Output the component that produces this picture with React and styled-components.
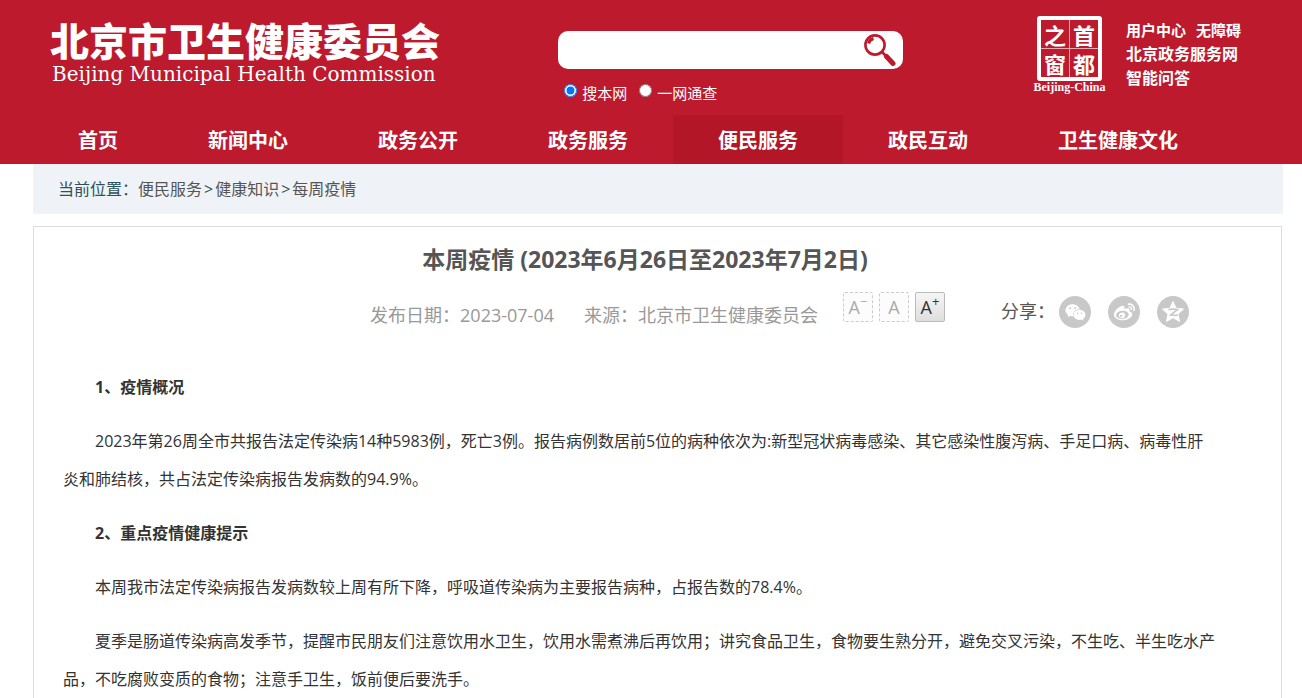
import React, { useState } from "react";
import styled, { createGlobalStyle } from "styled-components";
import { FaWeixin, FaWeibo } from "react-icons/fa";

const GlobalStyle = createGlobalStyle`
  * {
    box-sizing: border-box;
  }

  body {
    margin: 0;
    background: #fff;
    color: #333;
    font-family: "Open Sans", "Noto Sans CJK SC", sans-serif;
    font-size: 16px;
  }

  a {
    color: inherit;
    text-decoration: none;
  }
`;

const Header = styled.header`
  background: #bd1a2d;
  color: #fff;
`;

const Banner = styled.div`
  display: grid;
  grid-template-columns: 3fr 345px 2fr;
  height: 115px;
  padding: 0 60px 0 50px;
`;

const Brand = styled.a`
  display: flex;
  flex-direction: column;
  padding-top: 18px;
  white-space: nowrap;
`;

const BrandName = styled.span`
  font-family: "Noto Sans CJK SC", sans-serif;
  font-size: 39px;
  font-weight: 900;
  line-height: 42px;
`;

const BrandSub = styled.span`
  padding-left: 2px;
  font-family: "DejaVu Serif", serif;
  font-size: 20px;
  line-height: 28px;
`;

const Search = styled.form`
  padding-top: 31px;
`;

const SearchBox = styled.div`
  display: flex;
  align-items: center;
  height: 38px;
  padding-right: 6px;
  border-radius: 10px;
  background: #fff;
`;

const SearchInput = styled.input`
  flex: 1;
  min-width: 0;
  height: 36px;
  padding: 0 12px;
  border: 0;
  outline: 0;
  background: transparent;
  font-size: 16px;
`;

const SearchButton = styled.button`
  width: 34px;
  height: 34px;
  padding: 0;
  border: 0;
  background: transparent;
  cursor: pointer;
`;

const Scopes = styled.div`
  display: flex;
  gap: 12px;
  padding: 12px 0 0 6px;
`;

const Scope = styled.label`
  display: flex;
  align-items: flex-start;
  gap: 5px;
  font-size: 15px;
  line-height: 24px;

  input {
    width: 13px;
    height: 13px;
    margin: 3px 0 0;
  }
`;

const Side = styled.div`
  display: flex;
  justify-content: flex-end;
  gap: 20px;
  padding-top: 16px;
`;

const Capital = styled.a`
  display: flex;
  flex-direction: column;
  align-items: center;
  width: 73px;
  font-family: "Liberation Serif", serif;
  font-size: 12px;
  font-weight: 700;
  line-height: 12px;
`;

const Seal = styled.span`
  display: grid;
  grid-template-columns: 1fr 1fr;
  grid-template-rows: 1fr 1fr;
  gap: 1px;
  width: 65px;
  height: 65px;
  border: 4px solid #fff;
  border-radius: 3px;
  background: #e9a9b0;
`;

const SealChar = styled.span`
  display: flex;
  align-items: center;
  justify-content: center;
  background: #bd1a2d;
  font-family: "Noto Sans CJK SC", sans-serif;
  font-size: 22px;
  line-height: 22px;
`;

const SideLinks = styled.div`
  display: flex;
  flex-direction: column;
  width: 116px;
  padding-top: 2px;
  font-size: 16px;
  font-weight: 700;
  line-height: 24px;
  white-space: nowrap;
`;

const SmallLinks = styled.div`
  display: flex;
  gap: 10px;
  font-size: 15px;
`;

const Nav = styled.nav`
  display: flex;
  padding: 0 19px 0 33px;
`;

const NavLink = styled.a`
  padding: 2px 45px 0;
  background: ${({ $active }) => ($active ? "#b31727" : "transparent")};
  font-size: 20px;
  font-weight: 700;
  line-height: 47px;
  white-space: nowrap;
`;

const Page = styled.main`
  padding: 0 19px 0 33px;
`;

const Crumbs = styled.nav`
  padding: 0 25px;
  background: #eff3f7;
  color: #2b5259;
  line-height: 50px;

  a {
    color: #555;
  }
`;

const Arrow = styled.span`
  margin: 0 2px;
`;

const Article = styled.article`
  margin: 12px 1px 0 0;
  padding: 15px 62px 40px 29px;
  border: 1px solid #ddd;
`;

const Title = styled.h1`
  margin: 0;
  padding-left: 8px;
  color: #555;
  font-size: 23px;
  font-weight: 700;
  line-height: 34px;
  text-align: center;
`;

const Meta = styled.div`
  display: flex;
  justify-content: flex-end;
  height: 38px;
  margin: 14px 30px 0 0;
  color: #999;
  font-size: 18px;
  line-height: 50px;
  white-space: nowrap;
`;

const Source = styled.span`
  margin-left: 30px;
`;

const Sizes = styled.div`
  display: flex;
  gap: 6px;
  margin: 2px 0 0 25px;
`;

const SizeButton = styled.button`
  display: flex;
  align-items: center;
  justify-content: center;
  width: 30px;
  height: 30px;
  padding: 0;
  border: ${({ $on }) => ($on ? "1px solid #bbb" : "1px dashed #ccc")};
  border-radius: 2px;
  background: ${({ $on }) =>
    $on ? "linear-gradient(#f6f6f6, #dedede)" : "#fcfcfc"};
  color: ${({ $on }) => ($on ? "#333" : "#aaa")};
  font-family: "Open Sans", sans-serif;
  font-size: 18px;
  line-height: 30px;
  cursor: pointer;

  sup {
    align-self: flex-start;
    font-size: 13px;
    line-height: 16px;
  }
`;

const Share = styled.div`
  display: flex;
  margin-left: 56px;
  color: #555;
  line-height: 42px;
`;

const ShareIcons = styled.div`
  display: flex;
  gap: 17px;
  margin: 6px 0 0 4px;
`;

const ShareButton = styled.button`
  display: flex;
  align-items: center;
  justify-content: center;
  width: 32px;
  height: 32px;
  padding: 0;
  border: 0;
  border-radius: 50%;
  background: #c8c8c8;
  color: #fff;
  cursor: pointer;
`;

const Content = styled.div`
  margin-top: 40px;

  p {
    margin: 0 0 16px;
    text-indent: 2em;
    line-height: 38px;
  }
`;

const MagnifierIcon = () => (
  <svg width="34" height="34" viewBox="0 0 34 34" fill="none" aria-hidden="true">
    <circle cx="12" cy="12" r="9.6" stroke="#bd1a2d" strokeWidth="2.6" />
    <path d="M5.500 10.500a7 7 0 0 1 5-5" stroke="#bd1a2d" strokeWidth="3" />
    <path d="M19 19l4 4" stroke="#bd1a2d" strokeWidth="2.6" />
    <path
      d="M23.5 23.5l6.500 7"
      stroke="#bd1a2d"
      strokeWidth="5"
      strokeLinecap="round"
    />
  </svg>
);

const QzoneIcon = () => (
  <svg width="24" height="24" viewBox="0 0 24 24" aria-hidden="true">
    <path
      d="M12 1.5l3.1 6.8 7.4.8-5.5 5 1.5 7.3-6.5-3.7-6.5 3.7L7 14.1l-5.5-5 7.4-.8z"
      fill="#fff"
      stroke="#fff"
      strokeLinejoin="round"
    />
    <path
      d="M7.5 9.600c3-.6 6-.6 9 0l-7 5.400c2.400.4 4.800.4 7.500 0"
      fill="none"
      stroke="#c8c8c8"
      strokeWidth="1.6"
    />
  </svg>
);

const NAV = [
  "首页",
  "新闻中心",
  "政务公开",
  "政务服务",
  "便民服务",
  "政民互动",
  "卫生健康文化",
];

const App = () => {
  const [scope, setScope] = useState("site");
  const [size, setSize] = useState("large");

  return (
    <>
      <GlobalStyle />
      <Header>
        <Banner>
          <Brand href="#">
            <BrandName>北京市卫生健康委员会</BrandName>
            <BrandSub>Beijing Municipal Health Commission</BrandSub>
          </Brand>

          <Search onSubmit={(e) => e.preventDefault()}>
            <SearchBox>
              <SearchInput type="text" aria-label="搜索" />
              <SearchButton type="submit" aria-label="搜索">
                <MagnifierIcon />
              </SearchButton>
            </SearchBox>
            <Scopes>
              <Scope>
                <input
                  type="radio"
                  name="scope"
                  checked={scope === "site"}
                  onChange={() => setScope("site")}
                />
                搜本网
              </Scope>
              <Scope>
                <input
                  type="radio"
                  name="scope"
                  checked={scope === "all"}
                  onChange={() => setScope("all")}
                />
                一网通查
              </Scope>
            </Scopes>
          </Search>

          <Side>
            <Capital href="#">
              <Seal>
                <SealChar>之</SealChar>
                <SealChar>首</SealChar>
                <SealChar>窗</SealChar>
                <SealChar>都</SealChar>
              </Seal>
              Beijing-China
            </Capital>
            <SideLinks>
              <SmallLinks>
                <a href="#">用户中心</a>
                <a href="#">无障碍</a>
              </SmallLinks>
              <a href="#">北京政务服务网</a>
              <a href="#">智能问答</a>
            </SideLinks>
          </Side>
        </Banner>

        <Nav>
          {NAV.map((name) => (
            <NavLink key={name} href="#" $active={name === "便民服务"}>
              {name}
            </NavLink>
          ))}
        </Nav>
      </Header>

      <Page>
        <Crumbs>
          当前位置：<a href="#">便民服务</a>
          <Arrow>&gt;</Arrow>
          <a href="#">健康知识</a>
          <Arrow>&gt;</Arrow>
          <a href="#">每周疫情</a>
        </Crumbs>

        <Article>
          <Title>本周疫情 (2023年6月26日至2023年7月2日)</Title>
          <Meta>
            <span>发布日期：2023-07-04</span>
            <Source>来源：北京市卫生健康委员会</Source>
            <Sizes>
              <SizeButton
                $on={size === "small"}
                onClick={() => setSize("small")}
              >
                A<sup>−</sup>
              </SizeButton>
              <SizeButton
                $on={size === "normal"}
                onClick={() => setSize("normal")}
              >
                A
              </SizeButton>
              <SizeButton
                $on={size === "large"}
                onClick={() => setSize("large")}
              >
                A<sup>+</sup>
              </SizeButton>
            </Sizes>
            <Share>
              <span>分享：</span>
              <ShareIcons>
                <ShareButton aria-label="微信">
                  <FaWeixin size={21} />
                </ShareButton>
                <ShareButton aria-label="微博">
                  <FaWeibo size={21} />
                </ShareButton>
                <ShareButton aria-label="QQ空间">
                  <QzoneIcon />
                </ShareButton>
              </ShareIcons>
            </Share>
          </Meta>

          <Content>
            <p>
              <strong>1、疫情概况</strong>
            </p>
            <p>
              2023年第26周全市共报告法定传染病14种5983例，死亡3例。报告病例数居前5位的病种依次为:新型冠状病毒感染、其它感染性腹泻病、手足口病、病毒性肝炎和肺结核，共占法定传染病报告发病数的94.9%。
            </p>
            <p>
              <strong>2、重点疫情健康提示</strong>
            </p>
            <p>
              本周我市法定传染病报告发病数较上周有所下降，呼吸道传染病为主要报告病种，占报告数的78.4%。
            </p>
            <p>
              夏季是肠道传染病高发季节，提醒市民朋友们注意饮用水卫生，饮用水需煮沸后再饮用；讲究食品卫生，食物要生熟分开，避免交叉污染，不生吃、半生吃水产品，不吃腐败变质的食物；注意手卫生，饭前便后要洗手。
            </p>
          </Content>
        </Article>
      </Page>
    </>
  );
};

export default App;
